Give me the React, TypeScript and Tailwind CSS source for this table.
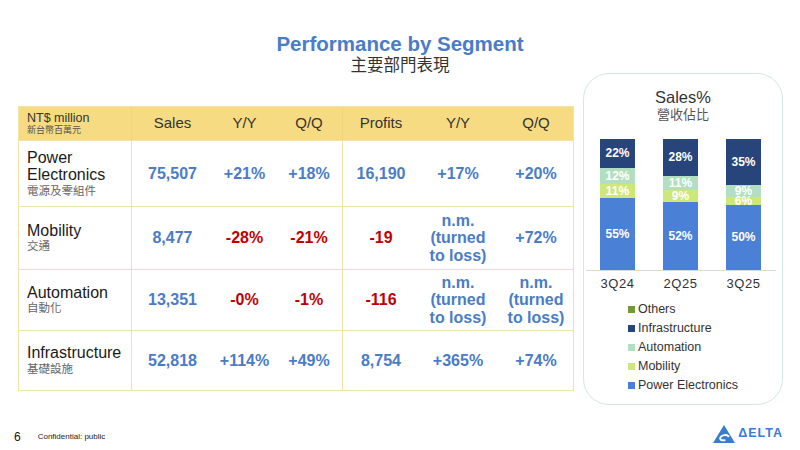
import React from "react";

const FONT = "font-['Liberation_Sans','Noto_Sans_CJK_TC',sans-serif]";
const COLS = "grid grid-cols-[113px_81px_63px_67px_76px_78px_78px]";

type Val = { t: React.ReactNode; red?: boolean };

const NM = (
  <>
    n.m.
    <br />
    (turned
    <br />
    to loss)
  </>
);

const rows: { en: React.ReactNode; zh: string; h: string; vals: Val[] }[] = [
  {
    en: (
      <>
        Power
        <br />
        Electronics
      </>
    ),
    zh: "電源及零組件",
    h: "h-[66px]",
    vals: [{ t: "75,507" }, { t: "+21%" }, { t: "+18%" }, { t: "16,190" }, { t: "+17%" }, { t: "+20%" }],
  },
  {
    en: "Mobility",
    zh: "交通",
    h: "h-[63px]",
    vals: [
      { t: "8,477" },
      { t: "-28%", red: true },
      { t: "-21%", red: true },
      { t: "-19", red: true },
      { t: NM },
      { t: "+72%" },
    ],
  },
  {
    en: "Automation",
    zh: "自動化",
    h: "h-[61px]",
    vals: [
      { t: "13,351" },
      { t: "-0%", red: true },
      { t: "-1%", red: true },
      { t: "-116", red: true },
      { t: NM },
      { t: NM },
    ],
  },
  {
    en: "Infrastructure",
    zh: "基礎設施",
    h: "h-[60px]",
    vals: [{ t: "52,818" }, { t: "+114%" }, { t: "+49%" }, { t: "8,754" }, { t: "+365%" }, { t: "+74%" }],
  },
];

const headers = ["Sales", "Y/Y", "Q/Q", "Profits", "Y/Y", "Q/Q"];

const bars = [
  { q: "3Q24", s: [22, 12, 11, 55] },
  { q: "2Q25", s: [28, 11, 9, 52] },
  { q: "3Q25", s: [35, 9, 6, 50] },
];
const segColors = ["bg-[#27457a]", "bg-[#b2dfc2]", "bg-[#cee779]", "bg-[#4a80d6]"];

const legend = [
  { c: "bg-[#6f9a36]", t: "Others" },
  { c: "bg-[#27457a]", t: "Infrastructure" },
  { c: "bg-[#b2dfc2]", t: "Automation" },
  { c: "bg-[#cee779]", t: "Mobility" },
  { c: "bg-[#4a80d6]", t: "Power Electronics" },
];

function Table() {
  return (
    <div className="ml-[18px] mt-[33px] w-[556px] border border-[#f3e2a8]">
      <div className={`${COLS} h-[33px] bg-[#f6db82] text-[#333]`}>
        <div className="flex flex-col justify-center pl-[8px] border-r border-[#f0d677]">
          <div className="text-[12.5px] leading-[14px]">NT$ million</div>
          <div className="text-[9px] leading-[11px] text-[#555]">新台幣百萬元</div>
        </div>
        {headers.map((h, i) => (
          <div
            key={i}
            className={`flex items-center justify-center text-[15px] ${i === 2 ? "border-r border-[#f0d677]" : ""}`}
          >
            {h}
          </div>
        ))}
      </div>
      {rows.map((r, ri) => (
        <div key={ri} className={`${COLS} ${r.h} border-t border-[#f3e2a8]`}>
          <div className="flex flex-col justify-center pl-[8px] border-r border-[#f3e2a8]">
            <div className="text-[16px] leading-[17.5px] text-[#1a1a1a]">{r.en}</div>
            <div className="text-[11.5px] leading-[15px] text-[#666]">{r.zh}</div>
          </div>
          {r.vals.map((v, vi) => (
            <div
              key={vi}
              className={`flex items-center justify-center text-center font-bold text-[16px] leading-[17.5px] ${
                v.red ? "text-[#c00000]" : "text-[#4a7cc7]"
              } ${vi === 2 ? "border-r border-[#f3e2a8]" : ""}`}
            >
              <div>{v.t}</div>
            </div>
          ))}
        </div>
      ))}
    </div>
  );
}

function Chart() {
  return (
    <div className="ml-[9px] w-[200px] h-[332px] rounded-[26px] border border-[#d3e9df] flex flex-col">
      <div className="mt-[14px] text-center text-[16.5px] leading-[19px] text-[#333]">Sales%</div>
      <div className="text-center text-[13px] leading-[16px] text-[#555]">營收佔比</div>
      <div className="mt-[16px] h-[131px] flex items-end gap-[28px] pl-[16px]">
        {bars.map((b, bi) => (
          <div key={bi} className="w-[35px] flex flex-col">
            {b.s.map((p, si) => (
              <div
                key={si}
                className={`${segColors[si]} flex items-center justify-center text-white font-bold text-[12px] leading-none`}
                style={{ height: `${p * 1.31}px` }}
              >
                <span className="whitespace-nowrap">{p}%</span>
              </div>
            ))}
          </div>
        ))}
      </div>
      <div className="ml-[2px] w-[190px] h-px bg-[#dadada]" />
      <div className="mt-[5px] flex gap-[28px] pl-[16px]">
        {bars.map((b, bi) => (
          <div key={bi} className="w-[35px] text-center text-[13px] leading-[16px] tracking-[0.6px] text-[#333] whitespace-nowrap flex justify-center">
            {b.q}
          </div>
        ))}
      </div>
      <div className="mt-[8px] pl-[44px] flex flex-col">
        {legend.map((l, li) => (
          <div key={li} className="h-[19px] flex items-center gap-[3px]">
            <div className={`w-[7px] h-[7px] ${l.c}`} />
            <div className="text-[12.5px] text-[#333]">{l.t}</div>
          </div>
        ))}
      </div>
    </div>
  );
}

function DeltaLogo() {
  return (
    <div className="flex items-center gap-[3px] mb-[6px]">
      <svg width="22" height="18" viewBox="0 0 22 18">
        <path d="M11 0 L22 18 L0 18 Z" fill="#3a7cd0" />
        <path
          d="M15.5 11.2 C13.5 9.4 8.8 9.6 7.2 12.6 C6.3 14.6 8.6 15.8 11.6 15.3"
          stroke="#fff"
          strokeWidth="1.9"
          fill="none"
          strokeLinecap="round"
        />
      </svg>
      <span className="text-[12.5px] font-bold tracking-[1px] text-[#3a7cd0] leading-none">ΔELTA</span>
    </div>
  );
}

export default function App() {
  return (
    <div className={`${FONT} w-[800px] h-[450px] bg-white flex flex-col overflow-hidden`}>
      <div className="h-[73px] pt-[31px] flex flex-col items-center">
        <div className="text-[20.5px] leading-[25px] font-bold text-[#4a7cc7]">Performance by Segment</div>
        <div className="text-[16.5px] leading-[18px] text-[#333]">主要部門表現</div>
      </div>
      <div className="h-[332px] flex items-start">
        <Table />
        <Chart />
      </div>
      <div className="flex-1 flex items-center pt-[18px] pl-[14px]">
        <span className="text-[12px] text-[#111]">6</span>
        <span className="ml-[17px] text-[8px] text-[#222]">Confidential: public</span>
        <div className="ml-auto mr-[17px]">
          <DeltaLogo />
        </div>
      </div>
    </div>
  );
}
